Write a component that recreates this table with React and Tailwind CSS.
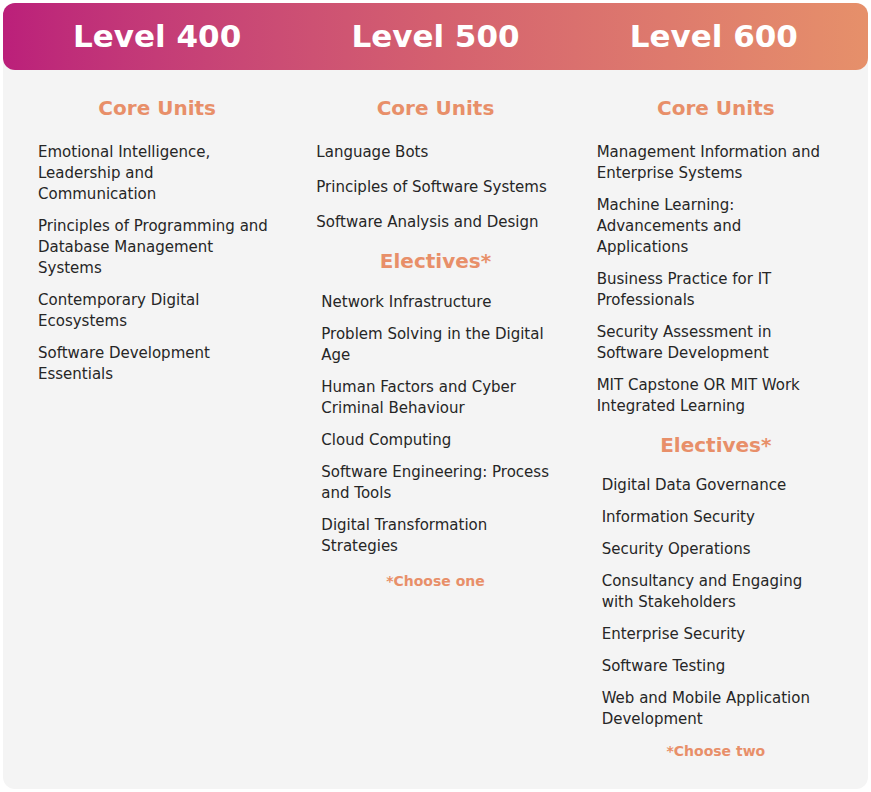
import React from "react";

const levels = [
  {
    title: "Level 400",
    core: [
      ["Emotional Intelligence,", "Leadership and", "Communication"],
      ["Principles of Programming and", "Database Management", "Systems"],
      ["Contemporary Digital", "Ecosystems"],
      ["Software Development", "Essentials"],
    ],
  },
  {
    title: "Level 500",
    coreGap: "gap-[14px]",
    core: [
      ["Language Bots"],
      ["Principles of Software Systems"],
      ["Software Analysis and Design"],
    ],
    electives: [
      ["Network Infrastructure"],
      ["Problem Solving in the Digital", "Age"],
      ["Human Factors and Cyber", "Criminal Behaviour"],
      ["Cloud Computing"],
      ["Software Engineering: Process", "and Tools"],
      ["Digital Transformation", "Strategies"],
    ],
    note: "*Choose one",
  },
  {
    title: "Level 600",
    shift: true,
    core: [
      ["Management Information and", "Enterprise Systems"],
      ["Machine Learning:", "Advancements and", "Applications"],
      ["Business Practice for IT", "Professionals"],
      ["Security Assessment in", "Software Development"],
      ["MIT Capstone OR MIT Work", "Integrated Learning"],
    ],
    electives: [
      ["Digital Data Governance"],
      ["Information Security"],
      ["Security Operations"],
      ["Consultancy and Engaging", "with Stakeholders"],
      ["Enterprise Security"],
      ["Software Testing"],
      ["Web and Mobile Application", "Development"],
    ],
    note: "*Choose two",
  },
];

function UnitList({ items, className, gap = "gap-[11px]" }) {
  return (
    <ul className={`flex flex-col ${gap} ${className}`}>
      {items.map((lines, i) => (
        <li key={i} className="text-[15px] leading-[21px] text-[#262626] whitespace-nowrap">
          {lines.map((l, j) => (
            <span key={j} className="block">{l}</span>
          ))}
        </li>
      ))}
    </ul>
  );
}

export default function App() {
  return (
    <div className="bg-white min-h-screen p-[3px] font-['DejaVu_Sans',sans-serif]">
      <div className="w-[865px] h-[786px] bg-[#f4f4f4] rounded-[12px]">
        {/* Header */}
        <div className="h-[67px] rounded-[12px] bg-gradient-to-r from-[#bb1f7a] via-[#d4606f] to-[#e6906a] grid grid-cols-3 px-[15px] items-center">
          {levels.map((lv) => (
            <div key={lv.title} className="text-center text-white font-bold text-[31px] leading-none">
              {lv.title}
            </div>
          ))}
        </div>

        {/* Columns */}
        <div className="grid grid-cols-3 px-[15px] pt-[24px]">
          {levels.map((lv) => (
            <div key={lv.title} className={`flex flex-col ${lv.shift ? "pl-[4px]" : ""}`}>
              <h2 className="text-center text-[20px] leading-[28px] font-bold text-[#e88f69]">Core Units</h2>
              <UnitList
                items={lv.core}
                gap={lv.coreGap}
                className={`mt-[20px] ${lv.shift ? "pl-[18px]" : "pl-[20px]"}`}
              />
              {lv.electives && (
                <>
                  <h2 className="text-center text-[20px] leading-[28px] font-bold text-[#e88f69] mt-[14px]">Electives*</h2>
                  <UnitList
                    items={lv.electives}
                    className={lv.shift ? "mt-[16px] pl-[23px]" : "mt-[17px] pl-[25px]"}
                  />
                  <p
                    className={`text-center text-[14px] leading-[20px] font-bold text-[#e88f69] ${
                      lv.shift ? "mt-[11px]" : "mt-[14px]"
                    }`}
                  >
                    {lv.note}
                  </p>
                </>
              )}
            </div>
          ))}
        </div>
      </div>
    </div>
  );
}
